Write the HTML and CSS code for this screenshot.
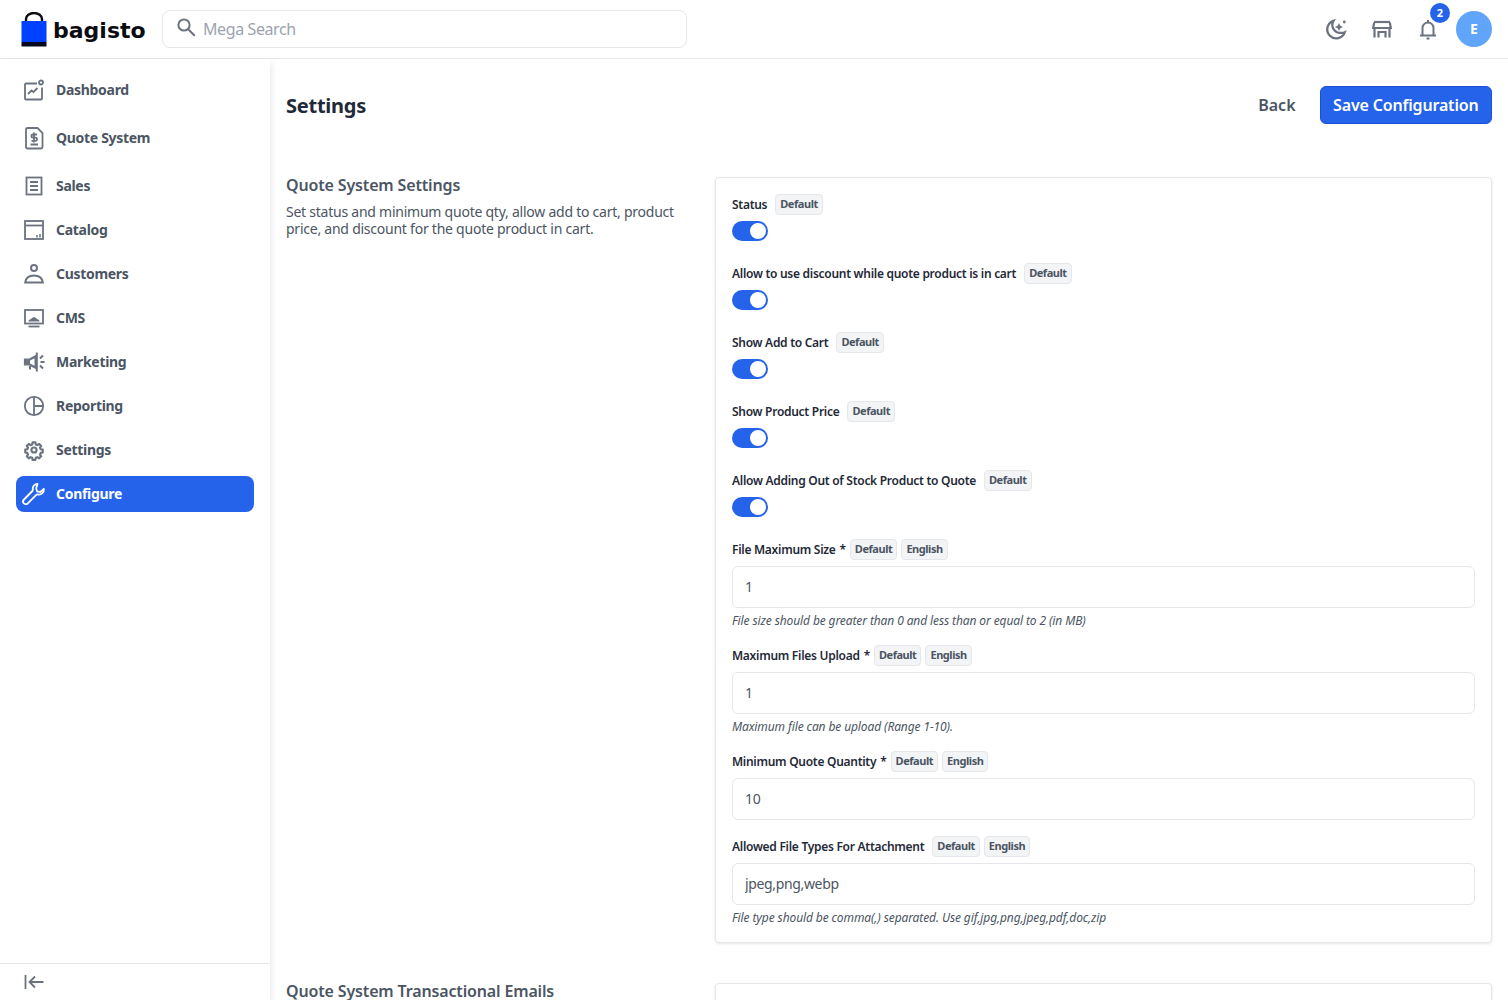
FILE: index.html
```html
<!DOCTYPE html>
<html>
<head>
  <link rel="stylesheet" href="styles.css">
</head>
<body>
  <header class="topbar">
    <div class="logo">
      <svg class="logo-bag" width="26" height="35" viewBox="0 0 26 35">
        <path d="M5 10.500V7a8 6 0 0 1 16 0V10.500" fill="none" stroke="#0b0b12" stroke-width="2.400"/>
        <rect x="0.500" y="9" width="25" height="21" fill="#0041ff"/>
        <rect x="0.500" y="30" width="25" height="4.500" fill="#05081e"/>
      </svg>
      <span class="logo-text">bagisto</span>
    </div>
    <div class="search">
      <svg width="24" height="24" viewBox="0 0 24 24" fill="none" stroke="#6b7280" stroke-width="2"><circle cx="10" cy="9" r="5.600"/><path d="M14.200 13.200l6 6" stroke-linecap="round"/></svg>
      <span class="search-text">Mega Search</span>
    </div>
    <div class="topbar-right">
      <svg class="top-icon" width="24" height="24" viewBox="0 0 24 24" fill="none" stroke="#6b7280" stroke-width="2.300"><path d="M9.500 3.800a9 9 0 1 0 11.300 11.400 8 8 0 0 1-3.300.6 8 8 0 0 1-8-12z"/><path d="M15 6l1.300 2.700 2.700 1.300-2.700 1.300-1.300 2.700-1.300-2.700-2.700-1.300 2.700-1.300z" fill="#6b7280" stroke="none"/><circle cx="20.300" cy="5" r="1.400" fill="#6b7280" stroke="none"/></svg>
      <svg class="top-icon" width="24" height="24" viewBox="0 0 24 24" fill="none" stroke="#6b7280" stroke-width="2.200"><path d="M4 5h16"/><path d="M4.200 5.500L3.200 11h17.600l-1-5.500"/><path d="M4.500 11v9.500M19.500 11v9.500"/><path d="M8.500 20.500V15h7v5.500"/></svg>
      <div class="bell">
        <svg class="top-icon" width="24" height="24" viewBox="0 0 24 24" fill="none" stroke="#6b7280" stroke-width="2"><path d="M6.500 18v-7a5.500 5.500 0 0 1 11 0v7"/><path d="M4 18.500h16"/><path d="M12 3v2M10.500 21.500h3"/></svg>
        <span class="badge">2</span>
      </div>
      <div class="avatar">E</div>
    </div>
  </header>

  <div class="layout">
    <aside class="sidebar">
      <nav class="nav">
        <a class="nav-item">
          <svg width="24" height="24" viewBox="0 0 24 24" fill="none" stroke="#6b7280" stroke-width="1.800"><path d="M15 5.500H4a1 1 0 0 0-1 1v14a1 1 0 0 0 1 1h15a1 1 0 0 0 1-1V9.500"/><circle cx="19" cy="4.500" r="2"/><path d="M6 16l3.500-3.500 2 1.500 4-4"/></svg>
          <span>Dashboard</span>
        </a>
        <a class="nav-item">
          <svg width="24" height="24" viewBox="0 0 24 24" fill="none" stroke="#6b7280" stroke-width="1.800"><path d="M5.500 2h10l5 5v14a1.500 1.500 0 0 1-1.500 1.500H5.500A1.500 1.500 0 0 1 4 21V3.500A1.500 1.500 0 0 1 5.500 2z" /><path d="M15 8.500h-4a1.500 1.500 0 0 0 0 3.200h2.400a1.500 1.500 0 0 1 0 3.200H9.500M12 6.500v10M8.500 18.500h7.500"/></svg>
          <span>Quote System</span>
        </a>
        <a class="nav-item nav-item-low">
          <svg width="24" height="24" viewBox="0 0 24 24" fill="none" stroke="#6b7280" stroke-width="1.800"><rect x="4.500" y="3.500" width="15" height="17"/><path d="M8 8h8M8 12h8M8 16h8"/></svg>
          <span>Sales</span>
        </a>
        <a class="nav-item">
          <svg width="24" height="24" viewBox="0 0 24 24" fill="none" stroke="#6b7280" stroke-width="1.800"><rect x="3" y="3" width="18" height="18"/><path d="M3 7.500h18"/><path d="M15 17v2.500M18 16v3.500" stroke-width="1.500"/></svg>
          <span>Catalog</span>
        </a>
        <a class="nav-item">
          <svg width="24" height="24" viewBox="0 0 24 24" fill="none" stroke="#6b7280" stroke-width="2"><circle cx="12" cy="6" r="3"/><path d="M3.200 20.500c.6-4.500 4-7 8.800-7s8.200 2.500 8.800 7z"/></svg>
          <span>Customers</span>
        </a>
        <a class="nav-item">
          <svg width="24" height="24" viewBox="0 0 24 24" fill="none" stroke="#6b7280" stroke-width="1.800"><rect x="3" y="4" width="18" height="13.500"/><path d="M6.500 20.500h11"/><path d="M6.500 15.500c0-1.500.8-2 2-2 .2-.8.8-1 1.300-1 .4-.8 1.200-1.200 2.200-1.200s1.800.4 2.200 1.200c.5 0 1.100.2 1.300 1 1.200 0 2 .5 2 2z" fill="#6b7280" stroke="none"/></svg>
          <span>CMS</span>
        </a>
        <a class="nav-item">
          <svg width="24" height="24" viewBox="0 0 24 24" fill="none" stroke="#6b7280" stroke-width="2"><path d="M14.800 2.500v19"/><path d="M14 5.500L7 9.200H2.500v5.600H7l7 3.700z" fill="#6b7280" stroke-width="1.200"/><path d="M8 10.500l4.500-2.300v7.600L8 13.500z" fill="#fff" stroke="none"/><path d="M8 16v3.500" /><path d="M18 8.500l3-3M18 15.500l3 3M18.500 12h4"/></svg>
          <span>Marketing</span>
        </a>
        <a class="nav-item">
          <svg width="24" height="24" viewBox="0 0 24 24" fill="none" stroke="#6b7280" stroke-width="1.800"><circle cx="12" cy="12" r="9.200"/><path d="M12 3v18M12 12h9"/></svg>
          <span>Reporting</span>
        </a>
        <a class="nav-item">
          <svg width="24" height="24" viewBox="0 0 24 24" fill="none" stroke="#6b7280" stroke-width="2.500"><g transform="translate(1.800 1.800) scale(0.85)"><path stroke-linejoin="round" d="M10.300 3h3.400l.4 2.400 2 .8 2-1.400 2.400 2.400-1.400 2 .8 2 2.400.4v3.400l-2.400.4-.8 2 1.400 2-2.400 2.400-2-1.400-2 .8-.4 2.400h-3.400l-.4-2.400-2-.8-2 1.400-2.400-2.400 1.400-2-.8-2-2.400-.4v-3.400l2.400-.4.8-2-1.400-2 2.400-2.400 2 1.400 2-.8z"/><circle cx="12" cy="12" r="3"/></g></svg>
          <span>Settings</span>
        </a>
        <a class="nav-item nav-item-active">
          <svg width="24" height="24" viewBox="0 0 24 24" fill="none" stroke="#fff" stroke-width="1.800" stroke-linejoin="round"><path d="M15.500 1.800c-3 .2-5 2.600-4.700 5.500.1.700.1 1.200-.4 1.700L2 17.500c-1.200 1.200-1.200 2.800-.1 3.900s2.800 1.100 3.900-.1l8.500-8.400c.5-.5 1-.5 1.700-.4 3.500.5 6.300-2.300 5.800-5.700l-3.500 3.200-3.300-.6-.8-3.200z"/></svg>
          <span>Configure</span>
        </a>
      </nav>
      <div class="collapse">
        <svg width="24" height="24" viewBox="0 0 24 24" fill="none" stroke="#6b7280" stroke-width="1.800"><path d="M3.500 5v14"/><path d="M21.500 12H8M13 6.500L7.500 12l5.500 5.500"/></svg>
      </div>
    </aside>

    <main class="main">
      <div class="page-head">
        <h1 class="page-title">Settings</h1>
        <div class="page-actions">
          <a class="back-link">Back</a>
          <button class="save-btn">Save Configuration</button>
        </div>
      </div>

      <section class="section">
        <div class="section-info">
          <h2 class="section-title">Quote System Settings</h2>
          <p class="section-desc">Set status and minimum quote qty, allow add to cart, product price, and discount for the quote product in cart.</p>
        </div>
        <div class="card">
          <div class="field field-toggle">
            <div class="field-label"><label>Status</label><span class="pill">Default</span></div>
            <div class="toggle"><span class="knob"></span></div>
          </div>
          <div class="field field-toggle">
            <div class="field-label"><label>Allow to use discount while quote product is in cart</label><span class="pill">Default</span></div>
            <div class="toggle"><span class="knob"></span></div>
          </div>
          <div class="field field-toggle">
            <div class="field-label"><label>Show Add to Cart</label><span class="pill">Default</span></div>
            <div class="toggle"><span class="knob"></span></div>
          </div>
          <div class="field field-toggle">
            <div class="field-label"><label>Show Product Price</label><span class="pill">Default</span></div>
            <div class="toggle"><span class="knob"></span></div>
          </div>
          <div class="field field-toggle">
            <div class="field-label"><label>Allow Adding Out of Stock Product to Quote</label><span class="pill">Default</span></div>
            <div class="toggle"><span class="knob"></span></div>
          </div>
          <div class="field">
            <div class="field-label"><label>File Maximum Size</label><span class="req">*</span><span class="pill">Default</span><span class="pill">English</span></div>
            <input class="text-input" value="1">
            <p class="help">File size should be greater than 0 and less than or equal to 2 (in MB)</p>
          </div>
          <div class="field">
            <div class="field-label"><label>Maximum Files Upload</label><span class="req">*</span><span class="pill">Default</span><span class="pill">English</span></div>
            <input class="text-input" value="1">
            <p class="help">Maximum file can be upload (Range 1-10).</p>
          </div>
          <div class="field">
            <div class="field-label"><label>Minimum Quote Quantity</label><span class="req">*</span><span class="pill">Default</span><span class="pill">English</span></div>
            <input class="text-input" value="10">
          </div>
          <div class="field">
            <div class="field-label"><label>Allowed File Types For Attachment</label><span class="pill">Default</span><span class="pill">English</span></div>
            <input class="text-input" value="jpeg,png,webp">
            <p class="help">File type should be comma(,) separated. Use gif,jpg,png,jpeg,pdf,doc,zip</p>
          </div>
        </div>
      </section>

      <section class="section">
        <div class="section-info">
          <h2 class="section-title">Quote System Transactional Emails</h2>
        </div>
        <div class="card card-next"></div>
      </section>
    </main>
  </div>
</body>
</html>
```
FILE: styles.css
```css
* {
  box-sizing: border-box;
}

html, body {
  height: 100%;
}

body {
  margin: 0;
  background: #fff;
  font-family: "Noto Sans", sans-serif;
  color: #4b5563;
  display: flex;
  flex-direction: column;
  overflow: hidden;
}

/* Top bar */
.topbar {
  height: 59px;
  flex: none;
  display: flex;
  align-items: center;
  padding: 0 16px 0 21px;
  border-bottom: 1px solid #e5e7eb;
  background: #fff;
}

.logo {
  display: flex;
  align-items: center;
  gap: 6px;
  width: 141px;
}

.logo-text {
  font-family: "DejaVu Sans", sans-serif;
  font-size: 22px;
  font-weight: 700;
  line-height: 34px;
  color: #0b0b12;
  margin-top: 3px;
}

.search {
  width: 525px;
  height: 38px;
  border: 1px solid #e5e7eb;
  border-radius: 8px;
  display: flex;
  align-items: center;
  padding-left: 11px;
  gap: 5px;
  margin-bottom: 1px;
}

.search svg {
  margin-top: -1px;
}

.search-text {
  font-size: 16px;
  color: #9ca3af;
  letter-spacing: -0.4px;
}

.topbar-right {
  margin-left: auto;
  display: flex;
  align-items: center;
  gap: 22px;
}

.top-icon {
  display: block;
}

.bell {
  position: relative;
}

.badge {
  position: absolute;
  top: -14px;
  left: 14px;
  width: 20px;
  height: 20px;
  border-radius: 50%;
  background: #2563eb;
  color: #fff;
  font-size: 11px;
  font-weight: 700;
  line-height: 20px;
  text-align: center;
}

.avatar {
  width: 36px;
  height: 36px;
  margin-left: -6px;
  border-radius: 50%;
  background: #60a5fa;
  color: #fff;
  font-size: 14px;
  font-weight: 700;
  line-height: 36px;
  text-align: center;
}

/* Sidebar */
.layout {
  flex: 1;
  min-height: 0;
  display: flex;
}

.sidebar {
  width: 270px;
  flex: none;
  display: flex;
  flex-direction: column;
  background: #fff;
  box-shadow: 0 4px 8px rgba(0, 0, 0, 0.12);
  position: relative;
}

.nav {
  flex: 1;
  padding: 7px 16px 0;
  display: grid;
  grid-template-columns: 1fr;
  grid-template-rows: 48px 48px 46px repeat(7, 44px);
  align-content: start;
}

.nav-item {
  display: flex;
  align-items: center;
  gap: 10px;
  padding-left: 6px;
  font-size: 14px;
  font-weight: 700;
  letter-spacing: -0.3px;
  color: #4b5563;
  border-radius: 8px;
}

.nav-item span {
  margin-bottom: 2px;
}

.nav-item-low {
  margin-top: 2px;
}

.nav-item-active {
  height: 36px;
  align-self: center;
  background: #2563eb;
  color: #fff;
}

.collapse {
  height: 37px;
  flex: none;
  border-top: 1px solid #e5e7eb;
  display: flex;
  align-items: center;
  padding-left: 22px;
}

/* Content */
.main {
  flex: 1;
  min-width: 0;
  padding: 27px 16px 0;
  overflow: hidden;
}

.page-head {
  display: flex;
  align-items: center;
  justify-content: space-between;
  margin-bottom: 53px;
}

.page-title {
  margin: 0;
  font-size: 20px;
  font-weight: 700;
  letter-spacing: -0.25px;
  color: #1f2937;
}

.page-actions {
  display: flex;
  align-items: center;
  gap: 24px;
}

.back-link {
  font-size: 16px;
  font-weight: 600;
  color: #4b5563;
}

.save-btn {
  height: 38px;
  padding: 0 12.500px;
  border: 1px solid #1d4ed8;
  border-radius: 6px;
  background: #2563eb;
  color: #fff;
  font-family: inherit;
  font-size: 16px;
  font-weight: 600;
  letter-spacing: -0.17px;
}

.section {
  display: flex;
  gap: 24px;
  align-items: flex-start;
  margin-bottom: 40px;
}

.section-info {
  width: 405px;
  flex: none;
}

.section-title {
  margin: 0;
  font-size: 16px;
  line-height: 17px;
  font-weight: 600;
  letter-spacing: -0.15px;
  color: #4b5563;
}

.section-desc {
  margin: 9px 0 0;
  font-size: 14px;
  line-height: 17px;
  letter-spacing: -0.24px;
  color: #4b5563;
}

.card {
  flex: 1;
  min-width: 0;
  padding: 16px 16px 0;
  background: #fff;
  border: 1px solid #e5e7eb;
  border-radius: 4px;
  box-shadow: 0 1px 3px rgba(0, 0, 0, 0.1);
}

.card-next {
  height: 100px;
}

.field {
  margin-bottom: 16px;
}

.field-toggle {
  margin-bottom: 22px;
}

.field-label {
  display: flex;
  align-items: center;
  height: 21px;
  margin-bottom: 6px;
  font-size: 12px;
  font-weight: 600;
  letter-spacing: -0.28px;
  color: #1f2937;
}

.field-label label {
  margin-right: 8px;
}

.req {
  margin: 0 4px 0 -4px;
  font-size: 12px;
}

.pill {
  height: 21px;
  padding: 0 4px;
  margin-right: 4px;
  border: 1px solid #e5e7eb;
  border-radius: 4px;
  background: #f3f4f6;
  color: #4b5563;
  font-size: 11px;
  font-weight: 700;
  letter-spacing: -0.45px;
  line-height: 18px;
}

.toggle {
  width: 36px;
  height: 20px;
  border-radius: 10px;
  background: #2563eb;
  padding: 2px 2px 2px 18px;
}

.knob {
  display: block;
  width: 16px;
  height: 16px;
  border-radius: 50%;
  background: #fff;
}

.text-input {
  display: block;
  width: 100%;
  height: 42px;
  padding: 0 12px 2px;
  border: 1px solid #e5e7eb;
  border-radius: 6px;
  background: #fff;
  color: #4b5563;
  font-family: inherit;
  font-size: 14px;
  letter-spacing: -0.35px;
}

.help {
  margin: 4px 0 0;
  font-size: 12px;
  line-height: 17px;
  font-style: italic;
  letter-spacing: -0.11px;
  color: #4b5563;
}
```
